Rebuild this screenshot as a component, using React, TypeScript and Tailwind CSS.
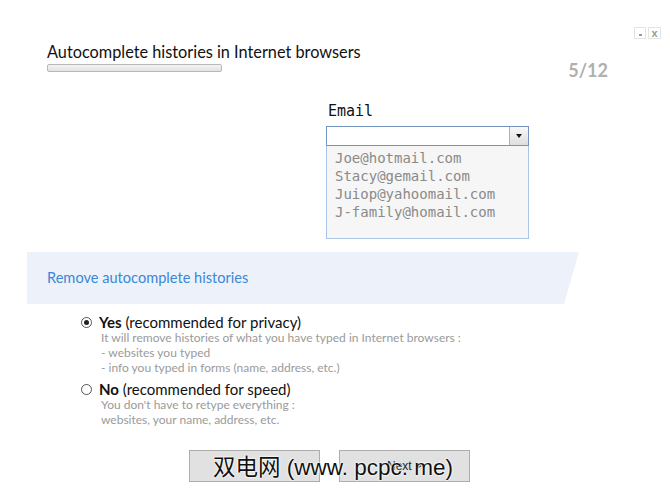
import React from "react";

const emails = ["Joe@hotmail.com", "Stacy@gemail.com", "Juiop@yahoomail.com", "J-family@homail.com"];

const Radio = ({ checked }: { checked?: boolean }) => (
  <span className="w-[11px] h-[11px] rounded-full border border-[#555] bg-white flex items-center justify-center shrink-0">
    {checked && <span className="w-[5px] h-[5px] rounded-full bg-[#222]" />}
  </span>
);

const App = () => {
  return (
    <div className="relative w-[670px] h-[493px] bg-white overflow-hidden font-['Lato','Open_Sans',sans-serif] text-[#111]">
      {/* window controls */}
      <div className="absolute top-[27px] right-[9px] flex gap-[2px]">
        <div className="w-[12px] h-[12px] border border-[#e4e4e4] bg-white flex items-end justify-center">
          <span className="w-[3px] h-[2px] bg-[#999] mb-[2px]" />
        </div>
        <div className="w-[13px] h-[12px] border border-[#e4e4e4] bg-white flex items-center justify-center text-[11px] leading-none font-bold text-[#999] font-['Liberation_Sans',sans-serif]">
          x
        </div>
      </div>

      <div className="flex pt-[42px] px-[47px]">
        <div className="flex flex-col">
          <div className="text-[16.3px] leading-[20px]">Autocomplete histories in Internet browsers</div>
          <div className="mt-[2px] w-[175px] h-[8px] rounded-[2px] border border-[#b8b8b8] bg-gradient-to-b from-[#f4f4f4] to-[#e2e2e2]" />
        </div>
        <div className="ml-auto pt-[19px] pr-[15px] text-[18px] leading-[18px] font-bold text-[#b0b0b0]">5/12</div>
      </div>

      <div className="ml-[326px] mt-[23px] w-[203px] font-['DejaVu_Sans_Mono',monospace]">
        <div className="text-[15px] leading-[18px] text-[#111] pl-[2px]">Email</div>
        <div className="mt-[6px] h-[20px] flex border border-[#7394c0] bg-white">
          <div className="flex-1" />
          <div className="w-[19px] border-l border-[#9db4d4] bg-gradient-to-b from-[#f8f8f8] to-[#dedede] flex items-center justify-center">
            <span className="w-0 h-0 border-l-[3px] border-r-[3px] border-t-[4px] border-l-transparent border-r-transparent border-t-[#111]" />
          </div>
        </div>
        <div className="h-[93px] border-x border-b border-[#a9c6e6] bg-[#f6f6f6] pt-[3px] pl-[8px]">
          {emails.map((e) => (
            <div key={e} className="text-[14px] leading-[18px] text-[#8a8a8a]">
              {e}
            </div>
          ))}
        </div>
      </div>

      <div className="mt-[13px] ml-[27px] w-[552px] h-[52px] bg-[#edf2fa] flex items-center pl-[20px] [clip-path:polygon(0_0,100%_0,97.3%_100%,0_100%)]">
        <span className="text-[14.6px] text-[#3b87d8]">Remove autocomplete histories</span>
      </div>

      <div className="pl-[81px] mt-[11px]">
        <div className="flex items-center gap-[7px] text-[15px] leading-[15px]">
          <Radio checked />
          <span>
            <b>Yes</b> (recommended for privacy)
          </span>
        </div>
        <div className="pl-[20px] text-[12px] leading-[15px] text-[#9a9a9a]">
          <div>It will remove histories of what you have typed in Internet browsers :</div>
          <div>- websites you typed</div>
          <div>- info you typed in forms (name, address, etc.)</div>
        </div>
        <div className="mt-[7px] flex items-center gap-[7px] text-[15px] leading-[15px]">
          <Radio />
          <span>
            <b>No</b> (recommended for speed)
          </span>
        </div>
        <div className="pl-[20px] text-[12px] leading-[15px] text-[#9a9a9a]">
          <div>You don't have to retype everything :</div>
          <div>websites, your name, address, etc.</div>
        </div>
      </div>

      <div className="mt-[23px] ml-[189px] flex gap-[19px] font-['Liberation_Sans',sans-serif]">
        <div className="w-[131px] h-[32px] border border-[#adadad] bg-[#e1e1e1]" />
        <div className="w-[131px] h-[32px] border border-[#adadad] bg-[#e1e1e1] flex items-center justify-center text-[12px] text-[#222]">
          Next &gt;
        </div>
      </div>

      {/* watermark */}
      <div className="absolute left-[213px] top-[454px] text-[22.5px] leading-[28px] text-[#111] font-['Liberation_Sans','Noto_Sans_CJK_SC',sans-serif] [text-shadow:0_0_2px_#fff,0_0_2px_#fff,0_0_2px_#fff]">
        双电网 (www. pcpc. me)
      </div>
    </div>
  );
};

export default App;
